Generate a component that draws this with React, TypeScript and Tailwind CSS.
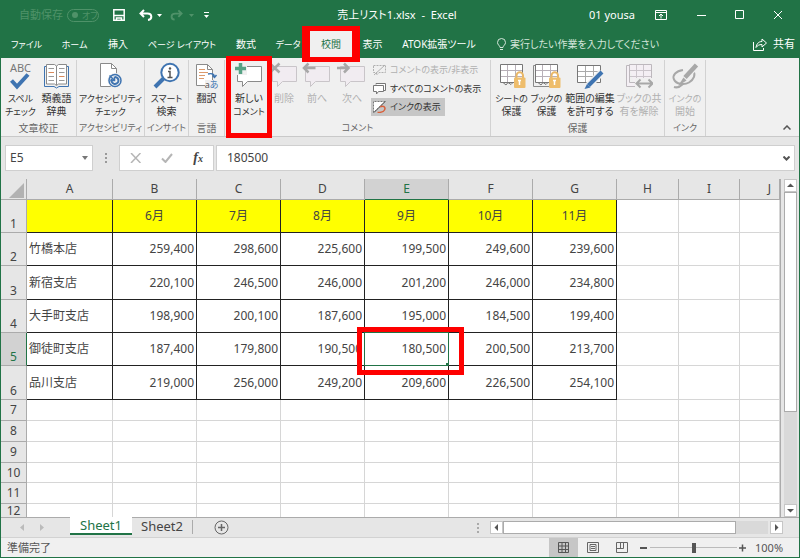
import type { ReactNode } from "react";
import { clsx } from "clsx";

const tabs = [
  { label: "ファイル", width: "w-[49px]" },
  { label: "ホーム", width: "w-[47px]" },
  { label: "挿入", width: "w-[40px]" },
  { label: "ページ レイアウト", width: "w-[88px]" },
  { label: "数式", width: "w-[40px]" },
  { label: "データ", width: "w-[44px]" },
  { label: "校閲", width: "w-[42px]", active: true },
  { label: "表示", width: "w-[41px]" },
  { label: "ATOK拡張ツール", width: "w-[92px]" },
];

const columns = ["A", "B", "C", "D", "E", "F", "G", "H", "I", "J"];

const rows = [
  { height: "h-[33px]", cells: ["", "6月", "7月", "8月", "9月", "10月", "11月"] },
  { height: "h-[33px]", cells: ["竹橋本店", "259,400", "298,600", "225,600", "199,500", "249,600", "239,600"] },
  { height: "h-[34px]", cells: ["新宿支店", "220,100", "246,500", "246,000", "201,200", "246,000", "234,800"] },
  { height: "h-[33px]", cells: ["大手町支店", "198,900", "200,100", "187,600", "195,000", "184,500", "199,400"] },
  { height: "h-[33px]", cells: ["御徒町支店", "187,400", "179,800", "190,500", "180,500", "200,500", "213,700"] },
  { height: "h-[34px]", cells: ["品川支店", "219,000", "256,000", "249,200", "209,600", "226,500", "254,100"] },
  { height: "h-[21px]", cells: [] },
  { height: "h-[21px]", cells: [] },
  { height: "h-[21px]", cells: [] },
  { height: "h-[20px]", cells: [] },
  { height: "h-[21px]", cells: [] },
  { height: "h-[14px] leading-[13px]", cells: [] },
];

// kana-only labels are set one size smaller than kanji
function labelSize(text: string) {
  return /^[ァ-ヶー\s]+の?$/.test(text) ? "text-[9px]" : "text-[10px]";
}

function Group({
  label,
  className,
  start,
  children,
}: {
  label: string;
  className?: string;
  start?: boolean;
  children: ReactNode;
}) {
  return (
    <section className={clsx("flex shrink-0 flex-col border-r border-[#d2d2d2]", className)}>
      <div className={clsx("flex flex-1", start ? "pl-[5px]" : "justify-center")}>{children}</div>
      <div className={clsx("text-center leading-4 whitespace-nowrap text-[#666]", labelSize(label))}>{label}</div>
    </section>
  );
}

function RibbonButton({
  icon,
  lines,
  width,
  disabled,
  marked,
}: {
  icon: ReactNode;
  lines: string[];
  width: string;
  disabled?: boolean;
  marked?: boolean;
}) {
  return (
    <button
      type="button"
      disabled={disabled}
      className={clsx(
        "relative flex shrink-0 flex-col items-center whitespace-nowrap",
        width,
        disabled ? "text-[#b0b0b0]" : "text-[#333]"
      )}
    >
      <span className="flex h-8 items-center">{icon}</span>
      {lines.map((line) => (
        <span key={line} className={clsx("leading-[13px]", labelSize(line))}>
          {line}
        </span>
      ))}
      {marked && <span className="absolute -top-1 -right-1 -left-1 z-10 h-[82px] border-[5px] border-[#fe0000]" />}
    </button>
  );
}

function SpellIcon() {
  return (
    <span className="flex flex-col items-center">
      <span className="text-[11px] leading-[11px] text-[#777]">ABC</span>
      <svg width="20" height="17" viewBox="0 0 20 17" fill="none" stroke="#3f74b1" strokeWidth="4">
        <path d="M1.500 7.500 7 13.500 18 1.500" />
      </svg>
    </span>
  );
}

function ThesaurusIcon() {
  return (
    <svg width="27" height="26" viewBox="0 0 27 26" fill="none">
      <path d="M3 3.500H1.500v20H11l2.500 1.500 2.500-1.500h9.500v-20H24" stroke="#3f74b1" />
      <path d="M3.500 1.500h8l2 1.500 2-1.500h8v19.500h-8l-2 1.500-2-1.500h-8z" fill="#fff" stroke="#8a8a8a" />
      <path d="M13.500 3v19" stroke="#8a8a8a" />
      <path d="M5.500 5.500H11M5.500 13.500H11M5.500 17.500H11M16 5.500h5.500M16 9.500h5.500M16 17.500h5.500" stroke="#999" />
      <path d="M5.500 9.500H11M16 13.500h5.500" stroke="#d98a5b" />
    </svg>
  );
}

function AccessibilityIcon() {
  return (
    <svg width="24" height="28" viewBox="0 0 24 28" fill="none">
      <path d="M1.500 1.500h11l5 5v18h-16z" fill="#fff" stroke="#8a8a8a" />
      <path d="M12.500 1.500v5h5" stroke="#8a8a8a" />
      <circle cx="16" cy="18.500" r="7.500" fill="#f0f0f0" />
      <circle cx="16" cy="18.500" r="6" stroke="#3f74b1" strokeWidth="1.500" />
      <path d="M16 15a3.500 3.500 0 1 1-3.200 2" stroke="#3f74b1" strokeWidth="2" />
      <path d="M10.500 13.500l4.500 4.500M15.500 14.500v4h-4" stroke="#3f74b1" strokeWidth="1.500" />
    </svg>
  );
}

function SearchInfoIcon() {
  return (
    <svg width="28" height="28" viewBox="0 0 28 28" fill="none">
      <path d="M10.500 16.500 2 25" stroke="#3f74b1" strokeWidth="4" />
      <circle cx="17" cy="10.500" r="8.700" fill="#fff" stroke="#3f74b1" strokeWidth="2" />
      <circle cx="17" cy="6.500" r="1.200" fill="#555" />
      <path d="M15 9.500h2v6M14.500 15.500h5" stroke="#555" strokeWidth="1.500" />
    </svg>
  );
}

function TranslateIcon() {
  return (
    <span className="relative block h-[27px] w-6">
      <svg width="24" height="27" viewBox="0 0 24 27" fill="none">
        <path d="M1.500 1.500h11l5 5v16h-16z" fill="#fff" stroke="#8a8a8a" />
        <path d="M12.500 1.500v5h5" stroke="#8a8a8a" />
        <path d="M4 6.500h6M4 9.500h9M4 12.500h6M4 15.500h5" stroke="#dc9a6d" />
        <path d="M13 11c4-1 6 0 6.500 3M17.500 12.500l2 2 2-2.500" stroke="#3f74b1" strokeWidth="1.500" />
      </svg>
      <span className="absolute right-0 bottom-0 bg-[#f0f0f0] text-[9px] leading-[10px] text-[#555]">
        a<b className="font-normal text-[#3f74b1]">あ</b>
      </span>
    </span>
  );
}

function CommentIcon({ kind }: { kind: "new" | "delete" | "prev" | "next" }) {
  const isNew = kind === "new";
  return (
    <svg width="30" height="28" viewBox="0 0 30 28" fill="none">
      <path
        d="M3.500 4.500h24v15h-14l-5 5v-5h-5z"
        fill={isNew ? "#fff" : "#f1ecf1"}
        stroke={isNew ? "#8a8a8a" : "#c9c5c9"}
      />
      {isNew && (
        <>
          <path d="M0 0h13v13H0z" fill="#f0f0f0" />
          <path d="M6.500 1v11M1 6.500h11" stroke="#56a285" strokeWidth="3.500" />
        </>
      )}
      {kind === "delete" && <path d="M1 1.500l9.500 9M10.500 1.500 1 10.500" stroke="#a8a8a8" strokeWidth="2.500" />}
      {kind === "prev" && <path d="M13.500 6H2M6.500 1.500 2 6l4.500 4.500" stroke="#a8a8a8" strokeWidth="2.500" />}
      {kind === "next" && <path d="M0 6h11.500M7 1.500 11.500 6 7 10.500" stroke="#a8a8a8" strokeWidth="2.500" />}
    </svg>
  );
}

function SheetLockIcon({ book }: { book?: boolean }) {
  return (
    <svg width="28" height="28" viewBox="0 0 28 28" fill="none">
      {book && <path d="M4 3.500H.5v21H16" stroke="#8a8a8a" />}
      <path d="M2.500 2.500h22v18h-22z" fill="#fff" stroke="#777" />
      <path d="M9.500 3v17M17.500 3v17M3 8.500h21M3 14.500h21" stroke="#b8b0b8" />
      <path d="M5 20.500l3 2.500 2-2.500 3 2 2-2" stroke="#777" />
      <path d="M18.500 16v-2.500a3.200 3.200 0 0 1 6.500 0V16" stroke="#eab766" strokeWidth="2" />
      <rect x="16" y="15.500" width="11.500" height="10.500" rx="1" fill="#eebd6c" />
      <path d="M21.500 18v5M20 18.500h3" stroke="#fff" strokeWidth="1.500" />
    </svg>
  );
}

function EditRangeIcon() {
  return (
    <svg width="28" height="28" viewBox="0 0 28 28" fill="none">
      <path d="M1.500 3.500h23v17h-23z" fill="#fff" stroke="#777" />
      <path d="M9.500 4v16M17.500 4v16M2 9.500h22M2 14.500h22" stroke="#aaa" />
      <path d="M26 10 12.500 23.500" stroke="#f0f0f0" strokeWidth="7" />
      <path d="M26 10 12.500 23.500" stroke="#3f74b1" strokeWidth="4" />
      <path d="M11 22l3.500 3.500L8.500 27z" fill="#3f74b1" />
    </svg>
  );
}

function UnshareIcon() {
  return (
    <svg width="28" height="28" viewBox="0 0 28 28" fill="none">
      <path d="M4.500 2.500h22v18h-22zM4 3.500H1.500v21H10" fill="#f4eff4" stroke="#bdb8bd" />
      <path d="M11.500 3v17M18.500 3v17M5 8.500h21M5 14.500h21" stroke="#cbc5cb" />
      <path d="M10 16h18v11H10z" fill="#f0f0f0" />
      <path d="M12 21.500h15M15.500 17.500l-4 4 4 4M23.500 17.500l4 4-4 4" stroke="#a8a8a8" strokeWidth="2" />
    </svg>
  );
}

function InkIcon() {
  return (
    <svg width="28" height="28" viewBox="0 0 28 28" fill="none">
      <path d="M12 8C5 9 1 13 3 17.500 5 22 13 23.500 18 20.500c5-3 7-8 4-11.500" stroke="#a8a8a8" strokeWidth="2" />
      <path d="M3 25c3 1 6 0 9-3" stroke="#a8a8a8" strokeWidth="2" />
      <path d="M25.500 3 14 15.500" stroke="#f0f0f0" strokeWidth="7" />
      <path d="M25.500 3 14 15.500" stroke="#a8a8a8" strokeWidth="4.500" />
      <path d="M12.500 15.500l3 3L7 24z" fill="#a8a8a8" />
    </svg>
  );
}

function TitleBar() {
  return (
    <header className="flex h-[30px] items-center text-[11px] text-white">
      <div className="flex flex-1 items-center pl-[18px]">
        <span className="text-[#4f9269]">自動保存</span>
        <button
          type="button"
          role="switch"
          aria-checked="false"
          className="ml-1 flex h-[13px] w-8 items-center gap-1 rounded-full border border-[#4f9269] pl-1 text-[9px] leading-none text-[#4f9269]"
        >
          <span className="size-1.5 rounded-full bg-[#4f9269]" />
          オフ
        </button>
        <button type="button" aria-label="上書き保存" className="ml-3.5">
          <svg width="12" height="12" viewBox="0 0 12 12" fill="none" stroke="#fff" strokeWidth="1.500">
            <path d="M.8.800h10.400v10.400H.800zM1 6.500h10M3.500 11V9h5v2" />
          </svg>
        </button>
        <button type="button" aria-label="元に戻す" className="ml-3.5 flex items-center gap-1">
          <svg width="14" height="12" viewBox="0 0 14 12" fill="none" stroke="#fff" strokeWidth="2">
            <path d="M5 1 1.500 4.500 5 8M2 4.500h6.500c5 0 5 6 .5 6.500" />
          </svg>
          <svg width="5" height="3" fill="#fff">
            <path d="M0 0h5L2.500 3z" />
          </svg>
        </button>
        <button type="button" aria-label="やり直し" className="ml-2 flex items-center gap-1.5" disabled>
          <svg width="13" height="12" viewBox="0 0 14 12" fill="none" stroke="#4f9269" strokeWidth="2">
            <path d="M9 1l3.500 3.500L9 8M12 4.500H5.500c-5 0-5 6-.5 6.500" />
          </svg>
          <svg width="5" height="3" fill="#4f9269">
            <path d="M0 0h5L2.500 3z" />
          </svg>
        </button>
        <button type="button" aria-label="クイック アクセス ツール バーのユーザー設定" className="ml-2.5">
          <svg width="5" height="6" fill="#fff">
            <path d="M0 0h5v1H0zM0 3h5L2.500 6z" />
          </svg>
        </button>
      </div>
      <h1 className="pr-2 whitespace-pre">売上リスト1.xlsx  -  Excel</h1>
      <div className="flex flex-1 items-center justify-end pr-4">
        <span className="mr-5">01 yousa</span>
        <button type="button" aria-label="リボンの表示オプション" className="mr-7">
          <svg width="12" height="10" viewBox="0 0 12 10" fill="none" stroke="#fff">
            <path d="M.5.500h11v9H.500zM.5 2.500h11M6 8.500V4M4 6l2-2 2 2" />
          </svg>
        </button>
        <button type="button" aria-label="最小化" className="mr-7">
          <svg width="12" height="10" stroke="#fff">
            <path d="M2 5.500h9" />
          </svg>
        </button>
        <button type="button" aria-label="最大化" className="mr-7">
          <svg width="10" height="10" fill="none" stroke="#fff">
            <path d="M.5.500h8v8h-8z" />
          </svg>
        </button>
        <button type="button" aria-label="閉じる">
          <svg width="10" height="10" stroke="#fff">
            <path d="M1 1l8 8M9 1 1 9" />
          </svg>
        </button>
      </div>
    </header>
  );
}

function TabRow() {
  return (
    <nav className="flex h-7 items-end pl-px text-[10px] text-white">
      {tabs.map((tab) => (
        <button
          key={tab.label}
          type="button"
          className={clsx(
            "relative h-[27px] shrink-0 whitespace-nowrap",
            tab.width,
            labelSize(tab.label),
            tab.active && "bg-[#f0f0f0] text-[#217346]"
          )}
        >
          {tab.label}
          {tab.active && (
            <span className="absolute -top-[5px] -right-2 -bottom-1 -left-2 z-20 border-x-[8px] border-y-[5px] border-[#fe0000]" />
          )}
        </button>
      ))}
      <label className="flex h-[27px] min-w-0 flex-1 items-center gap-1 pl-3">
        <svg width="9" height="13" viewBox="0 0 9 13" fill="none" stroke="#d5e6db">
          <path d="M3 9.500c0-2-2.500-2.500-2.500-5a4 4 0 0 1 8 0c0 2.500-2.500 3-2.500 5zM3 11.500h3" />
        </svg>
        <input
          type="text"
          className="min-w-0 flex-1 outline-none placeholder:text-[#d5e6db]"
          placeholder="実行したい作業を入力してください"
        />
      </label>
      <button type="button" className="flex h-[27px] items-center gap-1.5 pr-1 text-[11px]">
        <svg width="14" height="13" viewBox="0 0 14 13" fill="none" stroke="#fff">
          <path d="M.5 4v8.500h10V10M9 1l4.500 4L9 9V6.500C6 6.500 4.500 7.500 3 9.500 3.500 6 5.500 3.500 9 3.500z" />
        </svg>
        共有
      </button>
    </nav>
  );
}

function Ribbon() {
  return (
    <div className="flex h-[79px] border-b border-[#c9c9c9] bg-[#f0f0f0] pt-0.5">
      <Group label="文章校正" className="w-[76px]">
        <RibbonButton icon={<SpellIcon />} lines={["スペル", "チェック"]} width="w-9" />
        <RibbonButton icon={<ThesaurusIcon />} lines={["類義語", "辞典"]} width="w-9" />
      </Group>
      <Group label="アクセシビリティ" className="w-[68px]">
        <RibbonButton icon={<AccessibilityIcon />} lines={["アクセシビリティ", "チェック"]} width="w-[66px]" />
      </Group>
      <Group label="インサイト" className="w-11">
        <RibbonButton icon={<SearchInfoIcon />} lines={["スマート", "検索"]} width="w-10" />
      </Group>
      <Group label="言語" className="w-9">
        <RibbonButton icon={<TranslateIcon />} lines={["翻訳"]} width="w-8" />
      </Group>
      <Group label="コメント" className="w-[266px]" start>
        <RibbonButton icon={<CommentIcon kind="new" />} lines={["新しい", "コメント"]} width="w-[38px]" marked />
        <RibbonButton icon={<CommentIcon kind="delete" />} lines={["削除"]} width="w-8" disabled />
        <RibbonButton icon={<CommentIcon kind="prev" />} lines={["前へ"]} width="w-[34px]" disabled />
        <RibbonButton icon={<CommentIcon kind="next" />} lines={["次へ"]} width="w-9" disabled />
        <div className="ml-px flex flex-col items-start text-[9px] whitespace-nowrap text-[#333]">
          <button type="button" disabled className="flex h-[19px] items-center gap-1 px-0.5 text-[#b0b0b0]">
            <svg width="13" height="12" viewBox="0 0 13 12" fill="none" stroke="#b0b0b0">
              <path d="M.5 1.500h12v7H6l-2.500 2.500V8.500h-3z" strokeDasharray="2 1" />
              <path d="M1 11 12 1" />
            </svg>
            コメントの表示/非表示
          </button>
          <button type="button" className="flex h-[19px] items-center gap-1 px-0.5">
            <svg width="13" height="12" viewBox="0 0 13 12" fill="#fff" stroke="#777">
              <path d="M3 1.500V.5h9.500v7H11" />
              <path d="M.5 2.500h10v6H5.500L3.500 11V8.500h-3z" />
            </svg>
            すべてのコメントの表示
          </button>
          <button type="button" aria-pressed="true" className="flex h-[18px] w-[74px] items-center gap-1 bg-[#c6c6c6] px-0.5">
            <svg width="13" height="12" viewBox="0 0 13 12" fill="none">
              <path d="M.5 11.500V.5h12z" fill="#fff" stroke="#777" strokeDasharray="2 1" />
              <path d="M1 11.500 12 .5" stroke="#555" />
              <path d="M7 6c3-2 6 0 4.500 3-1 2-4 2.500-7 2.500" stroke="#d9603b" strokeWidth="1.500" />
            </svg>
            インクの表示
          </button>
        </div>
      </Group>
      <Group label="保護" className="w-[174px]">
        <RibbonButton icon={<SheetLockIcon />} lines={["シートの", "保護"]} width="w-9" />
        <RibbonButton icon={<SheetLockIcon book />} lines={["ブックの", "保護"]} width="w-[34px]" />
        <RibbonButton icon={<EditRangeIcon />} lines={["範囲の編集", "を許可する"]} width="w-[53px]" />
        <RibbonButton icon={<UnshareIcon />} lines={["ブックの共", "有を解除"]} width="w-[45px]" disabled />
      </Group>
      <Group label="インク" className="w-[41px]">
        <RibbonButton icon={<InkIcon />} lines={["インクの", "開始"]} width="w-10" disabled />
      </Group>
      <button type="button" aria-label="リボンを折りたたむ" className="ml-auto self-end pr-2 pb-1.5">
        <svg width="8" height="5" fill="none" stroke="#555" strokeWidth="1.500">
          <path d="M.5 4.500 4 1l3.500 3.500" />
        </svg>
      </button>
    </div>
  );
}

function FormulaBar() {
  return (
    <div className="flex h-[42px] items-center pr-1 pl-1 text-xs text-[#444]">
      <div className="flex h-[26px] w-[88px] items-center border border-[#cfcfcf] bg-white pr-1">
        <input aria-label="名前ボックス" defaultValue="E5" className="w-full min-w-0 pl-1 outline-none" />
        <svg width="6" height="4" fill="#777" className="shrink-0">
          <path d="M0 0h6L3 4z" />
        </svg>
      </div>
      <svg width="3" height="11" fill="#999" className="ml-3">
        <path d="M0 0h2v2H0zM0 4h2v2H0zM0 8h2v2H0z" />
      </svg>
      <div className="ml-[11px] flex h-[26px] w-[95px] items-center justify-between border border-[#cfcfcf] bg-white px-2.5">
        <button type="button" aria-label="キャンセル">
          <svg width="11" height="10" stroke="#b5b5b5" strokeWidth="1.500">
            <path d="M1 0l9.500 10M10.500 0 1 10" />
          </svg>
        </button>
        <button type="button" aria-label="入力">
          <svg width="12" height="10" fill="none" stroke="#b5b5b5" strokeWidth="2">
            <path d="M1 5.500 4.500 9 11 1" />
          </svg>
        </button>
        <button type="button" className="font-['Liberation_Serif',serif] text-sm leading-none font-bold italic">
          f<small className="text-[10px]">x</small>
        </button>
      </div>
      <div className="ml-0.5 flex h-[26px] min-w-0 flex-1 items-center border border-[#cfcfcf] bg-white pr-1">
        <input aria-label="数式バー" defaultValue="180500" className="min-w-0 flex-1 pl-2.5 outline-none" />
        <svg width="7" height="5" fill="none" stroke="#555" strokeWidth="2">
          <path d="M.5.500l3 3 3-3" />
        </svg>
      </div>
    </div>
  );
}

function Sheet() {
  return (
    <table className="w-full table-fixed border-separate border-spacing-0 border-r border-[#ababab] text-xs leading-4 text-[#444]">
      <colgroup>
        <col className="w-[26px]" />
        <col className="w-[86px]" />
        <col className="w-[84px]" />
        <col className="w-[84px]" />
        <col className="w-[84px]" />
        <col className="w-[84px]" />
        <col className="w-[84px]" />
        <col className="w-[84px]" />
        <col className="w-[62px]" />
        <col className="w-[61px]" />
        <col />
      </colgroup>
      <thead>
        <tr className="h-[21px]">
          <th aria-label="すべて選択" className="border-r border-b border-[#ababab] bg-[#e6e6e6] p-0">
            <svg width="15" height="15" fill="#b2b2b2" className="mt-0.5 ml-2">
              <path d="M15 0v15H0z" />
            </svg>
          </th>
          {columns.map((column) => (
            <th
              key={column}
              scope="col"
              className={clsx(
                "border-r border-b p-0 font-normal",
                column === "J" && "pl-5",
                column === "E"
                  ? "border-r-[#ababab] border-b-[#217346] bg-[#d2d2d2] text-[#217346]"
                  : "border-[#ababab] bg-[#e6e6e6]"
              )}
            >
              {column}
            </th>
          ))}
        </tr>
      </thead>
      <tbody>
        {rows.map((row, r) => (
          <tr key={r} className={row.height}>
            <th
              scope="row"
              className={clsx(
                "border-r border-b p-0 font-normal",
                r < 6 ? "align-bottom" : "align-middle",
                r === 4
                  ? "border-r-[#217346] border-b-[#ababab] bg-[#d2d2d2] text-[#217346]"
                  : "border-[#ababab] bg-[#e6e6e6]"
              )}
            >
              {r + 1}
            </th>
            {columns.map((column, c) => (
              <td
                key={column}
                className={clsx(
                  "relative border-r border-b p-0",
                  r < 6 && c < 7 ? "border-[#222]" : "border-[#d6d6d6]",
                  r === 0 && c < 7 ? "bg-[#ffff00] text-center" : "bg-white",
                  r > 0 && (c === 0 ? "pl-0.5 text-left" : "pr-0.5 text-right")
                )}
              >
                {row.cells[c]}
                {r === 4 && c === 4 && (
                  <>
                    <span className="absolute -inset-px border border-[#217346]" />
                    <span className="absolute -right-0.5 -bottom-0.5 size-1 bg-[#217346]" />
                    <span className="absolute -top-1.5 -right-4 -bottom-2.5 -left-2 z-10 border-[5px] border-[#fe0000]" />
                  </>
                )}
              </td>
            ))}
          </tr>
        ))}
      </tbody>
    </table>
  );
}

function Arrow({ path, label }: { path: string; label: string }) {
  return (
    <button
      type="button"
      aria-label={label}
      className="flex size-[13px] shrink-0 items-center justify-center border border-[#c6c6c6] bg-white"
    >
      <svg width="7" height="7" fill="#555">
        <path d={path} />
      </svg>
    </button>
  );
}

function SheetTabs() {
  return (
    <div className="flex h-5 items-start border-t border-[#ababab] bg-[#e6e6e6] text-[13px] leading-4 text-[#444]">
      <div className="flex w-[69px] items-center gap-4 self-center pl-[19px]">
        <svg width="4" height="7" fill="#bbb">
          <path d="M4 0v7L0 3.500z" />
        </svg>
        <svg width="4" height="7" fill="#bbb">
          <path d="M0 0v7l4-3.500z" />
        </svg>
      </div>
      <button type="button" className="-mt-px h-[18px] w-[62px] border-b-2 border-[#217346] bg-white text-[#217346]">
        Sheet1
      </button>
      <button type="button" className="h-4 w-[60px]">
        Sheet2
      </button>
      <span className="mt-0.5 h-3.5 w-px bg-[#ababab]" />
      <button type="button" aria-label="新しいシート" className="ml-[21px] self-center">
        <svg width="15" height="15" fill="none" stroke="#666">
          <circle cx="7.500" cy="7.500" r="6.500" />
          <path d="M4 7.500h7M7.500 4v7" strokeWidth="1.500" />
        </svg>
      </button>
      <div className="ml-auto flex w-[322px] items-center self-center pr-[2px]">
        <svg width="3" height="10" fill="#aaa" className="mr-2.5">
          <path d="M0 0h2v2H0zM0 4h2v2H0zM0 8h2v2H0z" />
        </svg>
        <Arrow label="左へスクロール" path="M5 0v7L1.500 3.500z" />
        <div className="mr-0.5 flex h-[13px] flex-1 bg-[#d9d9d9]">
          <div className="h-full w-[88%] border border-[#ababab] bg-white" />
        </div>
        <Arrow label="右へスクロール" path="M2 0v7l3.500-3.500z" />
        <span className="w-3.5" />
      </div>
    </div>
  );
}

function StatusBar() {
  return (
    <footer className="flex h-5 items-center border-t border-[#d2d2d2] bg-[#f0f0f0] pr-[15px] text-[11px] leading-4 text-[#555]">
      <span className="flex-1 pl-1.5">準備完了</span>
      <button type="button" aria-label="標準" className="flex h-full w-[29px] items-center justify-center bg-[#c6c6c6]">
        <svg width="11" height="11" fill="none" stroke="#555">
          <path d="M.5.500h10v10H.500zM4 0v11M7.500 0v11M0 4h11M0 7.500h11" />
        </svg>
      </button>
      <button type="button" aria-label="ページ レイアウト" className="flex w-[29px] justify-center">
        <svg width="12" height="11" fill="none" stroke="#666">
          <path d="M.5.500h11v10H.500zM3 2.500h6v6H3zM4 4.500h4M4 6.500h4" />
        </svg>
      </button>
      <button type="button" aria-label="改ページ プレビュー" className="flex w-[29px] justify-center">
        <svg width="12" height="11" fill="none" stroke="#666">
          <path d="M.5.500h11v10H.500zM.5 6.500h7v-6M4.500.500v6" />
        </svg>
      </button>
      <button type="button" aria-label="縮小" className="ml-1 flex">
        <svg width="8" height="8" stroke="#555" strokeWidth="2">
          <path d="M0 4h7" />
        </svg>
      </button>
      <input
        type="range"
        aria-label="ズーム"
        min="10"
        max="190"
        defaultValue="100"
        className="mx-0.5 h-2.5 w-[87px] appearance-none bg-[linear-gradient(#bbb,#bbb)] bg-[length:100%_1px] bg-center bg-no-repeat [&::-webkit-slider-thumb]:h-2.5 [&::-webkit-slider-thumb]:w-1 [&::-webkit-slider-thumb]:appearance-none [&::-webkit-slider-thumb]:bg-[#555]"
      />
      <button type="button" aria-label="拡大" className="flex">
        <svg width="8" height="8" stroke="#555" strokeWidth="1.500">
          <path d="M0 4h7M3.500.500v7" />
        </svg>
      </button>
      <span className="ml-2 w-[29px]">100%</span>
    </footer>
  );
}

export default function App() {
  return (
    <div className="flex h-screen flex-col overflow-hidden border-x border-b border-[#217346] bg-[#e6e6e6] font-['Noto_Sans','Noto_Sans_CJK_JP',sans-serif]">
      <div className="bg-[#217346] [font-feature-settings:'palt']">
        <TitleBar />
        <TabRow />
        <Ribbon />
      </div>
      <FormulaBar />
      <main className="flex min-h-0 flex-1">
        <div className="min-w-0 flex-1 overflow-hidden">
          <Sheet />
        </div>
        <div className="ml-[3px] flex w-[13px] shrink-0 flex-col bg-[#d9d9d9]">
          <Arrow label="上へスクロール" path="M0 5h7L3.500 1.500z" />
          <div className="h-[220px] border border-[#ababab] bg-white" />
          <span className="flex-1" />
          <Arrow label="下へスクロール" path="M0 2h7L3.500 5.500z" />
        </div>
        <span className="w-0.5" />
      </main>
      <SheetTabs />
      <StatusBar />
    </div>
  );
}
